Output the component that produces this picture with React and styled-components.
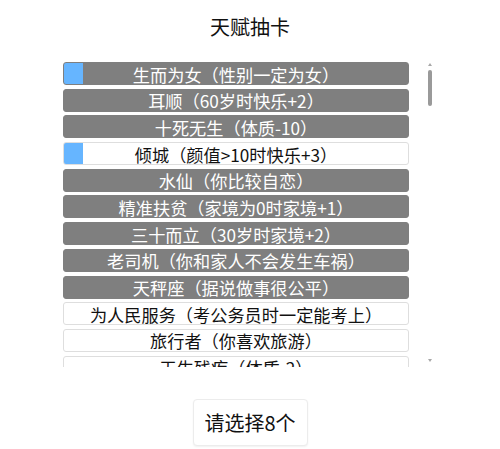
import styled, { createGlobalStyle } from "styled-components";

const GlobalStyle = createGlobalStyle`
  body {
    margin: 0;
    background: #fff;
    font-family: "Noto Sans CJK SC", "Noto Sans", sans-serif;
    color: #111;
  }
`;

// the first twelve are the ones shown at the top of the list
const shown = [
  { name: "生而为女（性别一定为女）", grade: "gray", picked: true },
  { name: "耳顺（60岁时快乐+2）", grade: "gray" },
  { name: "十死无生（体质-10）", grade: "gray" },
  { name: "倾城（颜值>10时快乐+3）", grade: "white", picked: true },
  { name: "水仙（你比较自恋）", grade: "gray" },
  { name: "精准扶贫（家境为0时家境+1）", grade: "gray" },
  { name: "三十而立（30岁时家境+2）", grade: "gray" },
  { name: "老司机（你和家人不会发生车祸）", grade: "gray" },
  { name: "天秤座（据说做事很公平）", grade: "gray" },
  { name: "为人民服务（考公务员时一定能考上）", grade: "white" },
  { name: "旅行者（你喜欢旅游）", grade: "white" },
  { name: "天生残疾（体质-2）", grade: "white" },
];

function App() {
  return (
    <Page>
      <GlobalStyle />
      <Title>天赋抽卡</Title>
      <ListFrame>
        <TalentList>
          {shown.map((t, i) => (
            <Talent key={i} $grade={t.grade} $picked={t.picked}>
              {t.name}
            </Talent>
          ))}
        </TalentList>
        <ScrollBar>
          <Arrow viewBox="0 0 4 3">
            <polygon points="2,0 4,3 0,3" />
          </Arrow>
          <Track>
            <Thumb />
          </Track>
          <Arrow viewBox="0 0 4 3">
            <polygon points="0,0 4,0 2,3" />
          </Arrow>
        </ScrollBar>
      </ListFrame>
      <Footer>
        <PickButton>请选择8个</PickButton>
      </Footer>
    </Page>
  );
}

const Page = styled.div`
  width: 500px;
  height: 449px;
  display: flex;
  flex-direction: column;
  align-items: center;
`;

const Title = styled.h1`
  margin: 13px 0 21px;
  font-size: 20px;
  line-height: 28px;
  font-weight: 400;
  color: #111;
`;

const ListFrame = styled.div`
  width: 374px;
  height: 305px;
  display: flex;
  justify-content: space-between;
`;

const TalentList = styled.div`
  width: 346px;
  height: 305px;
  overflow-y: auto;
  scrollbar-width: none;
  display: flex;
  flex-direction: column;
  gap: 3.7px;
`;

const ScrollBar = styled.div`
  width: 14px;
  display: flex;
  flex-direction: column;
  align-items: center;
  padding: 0 0 2px;
`;

const Arrow = styled.svg`
  width: 4px;
  height: 3px;
  margin: 1px 0 3px;
  fill: #a8a8a8;
`;

const Track = styled.div`
  flex: 1;
  width: 4px;
  padding-top: 1px;
`;

const Thumb = styled.div`
  width: 4px;
  height: 36px;
  border-radius: 2px;
  background: #9a9a9a;
`;

const Talent = styled.div`
  flex: none;
  box-sizing: border-box;
  width: 346px;
  height: 23px;
  display: flex;
  align-items: center;
  justify-content: center;
  font-size: 17.2px;
  line-height: 23px;
  padding-top: 1px;
  border-radius: 3px;
  white-space: nowrap;
  border: 1px solid ${(p) => (p.$grade === "gray" ? "#7f7f7f" : "#dedede")};
  color: ${(p) => (p.$grade === "gray" ? "#fff" : "#111")};
  background: ${(p) => {
    const base = p.$grade === "gray" ? "#7f7f7f" : "#fff";
    return p.$picked
      ? `linear-gradient(to right, #66b5ff 19px, ${base} 19px)`
      : base;
  }};
`;

const Footer = styled.div`
  margin-top: 32px;
`;

const PickButton = styled.button`
  width: 115px;
  height: 47px;
  font-family: "Noto Sans CJK SC", "Noto Sans", sans-serif;
  font-size: 20px;
  color: #111;
  background: #fff;
  border: 1px solid #ececec;
  border-radius: 4px;
  box-shadow: 0 1px 2px rgba(0, 0, 0, 0.06);
  padding: 0;
`;

export default App;
